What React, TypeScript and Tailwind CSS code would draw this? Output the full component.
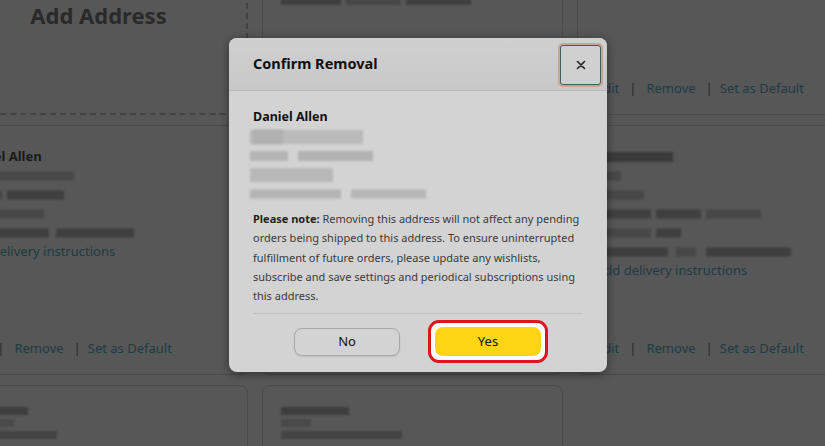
import React from "react";

type Seg = [number, number, string]; // left offset, width, color

function Blur({ segs, h = 9 }: { segs: Seg[]; h?: number }) {
  return (
    <div className="relative h-[19px]">
      {segs.map(([l, w, c], i) => (
        <div
          key={i}
          className="absolute top-1/2 -translate-y-1/2 blur-[1px]"
          style={{ left: l, width: w, height: h, background: c }}
        />
      ))}
    </div>
  );
}

function Links() {
  return (
    <div className="flex items-center text-[13px] leading-[19px] text-[#1d3c41] whitespace-nowrap">
      <span>Edit</span>
      <span className="mx-[10px] text-[#2a2a2a]">|</span>
      <span>Remove</span>
      <span className="ml-[10px] mr-[7px] text-[#2a2a2a]">|</span>
      <span>Set as Default</span>
    </div>
  );
}

function Card({
  name,
  lines,
  link = true,
  actions = true,
}: {
  name?: Seg[] | string;
  lines: Seg[][];
  link?: boolean;
  actions?: boolean;
}) {
  return (
    <div className="h-[250px] rounded-[8px] border border-[#4a4a4a] px-[18px] pt-[21px] pb-[16px] flex flex-col">
      {typeof name === "string" ? (
        <div className="text-[13px] font-bold leading-[19px] text-[#1a1a1a] whitespace-nowrap">{name}</div>
      ) : name ? (
        <Blur segs={name} h={10} />
      ) : null}
      {lines.map((s, i) => (
        <Blur key={i} segs={s} />
      ))}
      {link && (
        <div className="text-[13px] leading-[19px] text-[#1d3c41] whitespace-nowrap">Add delivery instructions</div>
      )}
      <div className="mt-auto">{actions && <Links />}</div>
    </div>
  );
}

const D = "#474747";
const D2 = "#3f3f3f";

export default function App() {
  return (
    <div className="relative w-[825px] h-[446px] overflow-hidden bg-[#575757] font-['Noto_Sans','Open_Sans',sans-serif]">
      <div className="ml-[-55px] mt-[-135px] grid grid-cols-[303px_301px_301px] gap-x-[14px] gap-y-[10px]">
        {/* Row 1 */}
        <div className="h-[250px] rounded-[8px] border-2 border-dashed border-[#434343] flex flex-col items-center pt-[132px] pl-[4px]">
          <div className="text-[22px] font-bold leading-[32px] text-[#2a2a2a]">Add Address</div>
        </div>
        <div className="h-[250px] rounded-[8px] border border-[#4a4a4a] px-[18px] pt-[21px] pb-[16px] flex flex-col">
          <div className="h-[74px]" />
          <Blur segs={[[0, 38, D2], [0, 20, "#3a3a3a"]]} />
          <div className="-mt-[6px]">
            <Blur segs={[[0, 47, D]]} />
          </div>
          <div className="-mt-[2px]">
            <Blur segs={[[0, 60, D2], [65, 55, D], [125, 65, D2]]} h={8} />
          </div>
          <div className="mt-auto">
            <Links />
          </div>
        </div>
        <Card lines={[]} link={false} />

        {/* Row 2 */}
        <Card
          name="Daniel Allen"
          lines={[
            [[0, 110, D]],
            [[0, 38, D], [43, 57, D2]],
            [[0, 80, D]],
            [[0, 85, D2], [92, 78, D2]],
          ]}
        />
        <div className="h-[250px] rounded-[8px] border border-[#4a4a4a]" />
        <Card
          name={[[0, 77, "#3a3a3a"]]}
          lines={[
            [[0, 25, D]],
            [[0, 48, D]],
            [[0, 55, D2], [60, 45, D2], [110, 55, D]],
            [[0, 55, D], [60, 25, D2]],
            [[0, 72, D2], [80, 20, D], [110, 85, D2]],
          ]}
        />

        {/* Row 3 */}
        <div className="h-[250px] rounded-[8px] border border-[#4a4a4a] px-[18px] pl-[20px] pt-[19px] flex flex-col">
          <div className="relative h-[12px]">
            <div className="absolute left-0 top-[2px] h-[8px] w-[62px] bg-[#3e3e3e] blur-[1px]" />
          </div>
          <div className="relative h-[12px]">
            <div className="absolute left-0 top-[2px] h-[8px] w-[48px] bg-[#4a4a4a] blur-[1px]" />
          </div>
          <div className="relative h-[12px]">
            <div className="absolute left-0 top-[2px] h-[8px] w-[91px] bg-[#444444] blur-[1px]" />
          </div>
        </div>
        <div className="h-[250px] rounded-[8px] border border-[#4a4a4a] px-[18px] pt-[19px] flex flex-col">
          <div className="relative h-[12px]">
            <div className="absolute left-0 top-[2px] h-[8px] w-[68px] bg-[#3e3e3e] blur-[1px]" />
          </div>
          <div className="relative h-[12px]">
            <div className="absolute left-0 top-[2px] h-[8px] w-[30px] bg-[#4a4a4a] blur-[1px]" />
          </div>
          <div className="relative h-[12px]">
            <div className="absolute left-0 top-[2px] h-[8px] w-[121px] bg-[#444444] blur-[1px]" />
          </div>
        </div>
        <div className="h-[250px]" />
      </div>

      {/* Modal */}
      <div className="absolute left-[229px] top-[38px] w-[378px] h-[334px] rounded-[8px] bg-[#d3d3d3] shadow-[0_2px_10px_rgba(0,0,0,0.45)] overflow-hidden flex flex-col">
        <div className="h-[53px] shrink-0 flex items-center justify-between pl-[24px] pr-[6px] bg-gradient-to-b from-[#d0d0d0] to-[#c8c8c8] border-b border-[#b8b8b8]">
          <span className="text-[14.5px] font-bold text-[#111111]">Confirm Removal</span>
          <div className="w-[41px] h-[40px] mt-[2px] rounded-[3px] border border-[#3c615c] shadow-[0_0_0_2px_#c9a594] bg-[#d0d0d0] flex items-center justify-center">
            <svg width="10" height="10" viewBox="0 0 10 10">
              <path d="M1.5 1.5 L8.5 8.5 M8.5 1.5 L1.5 8.5" stroke="#222" strokeWidth="1.6" strokeLinecap="round" />
            </svg>
          </div>
        </div>
        <div className="px-[24px] pt-[16px] flex flex-col">
          <div className="text-[12.5px] font-bold leading-[20px] text-[#111111]">Daniel Allen</div>
          <Blur segs={[[-3, 113, "#bababa"], [0, 30, "#b1b1b1"]]} h={14} />
          <Blur segs={[[-3, 38, "#b5b5b5"], [45, 75, "#b2b2b2"]]} h={10} />
          <Blur segs={[[-3, 83, "#b8b8b8"]]} h={14} />
          <Blur segs={[[-3, 91, "#b4b4b4"], [98, 75, "#b6b6b6"]]} h={9} />
          <p className="mt-[6px] text-[11px] leading-[19.25px] text-[#3a3a3a] whitespace-nowrap">
            <span className="font-bold text-[#222222]">Please note:</span> Removing this address will not affect any pending
            <br />
            orders being shipped to this address. To ensure uninterrupted
            <br />
            fulfillment of future orders, please update any wishlists,
            <br />
            subscribe and save settings and periodical subscriptions using
            <br />
            this address.
          </p>
          <div className="mt-[8px] h-px bg-[#c0c0c0]" />
        </div>
        <div className="mt-[6px] flex items-center pl-[65px] gap-[28px]">
          <div className="w-[106px] h-[28px] rounded-[8px] border border-[#a9a9a9] bg-[#d3d3d3] shadow-[0_1px_2px_rgba(0,0,0,0.1)] flex items-center justify-center text-[13px] text-[#111111]">
            No
          </div>
          <div className="rounded-[11px] border-[3px] border-[#e0141e] bg-white p-[4px]">
            <div className="w-[106px] h-[29px] rounded-[8px] bg-[#fdd514] flex items-center justify-center text-[13px] text-[#111111]">
              Yes
            </div>
          </div>
        </div>
      </div>
    </div>
  );
}
